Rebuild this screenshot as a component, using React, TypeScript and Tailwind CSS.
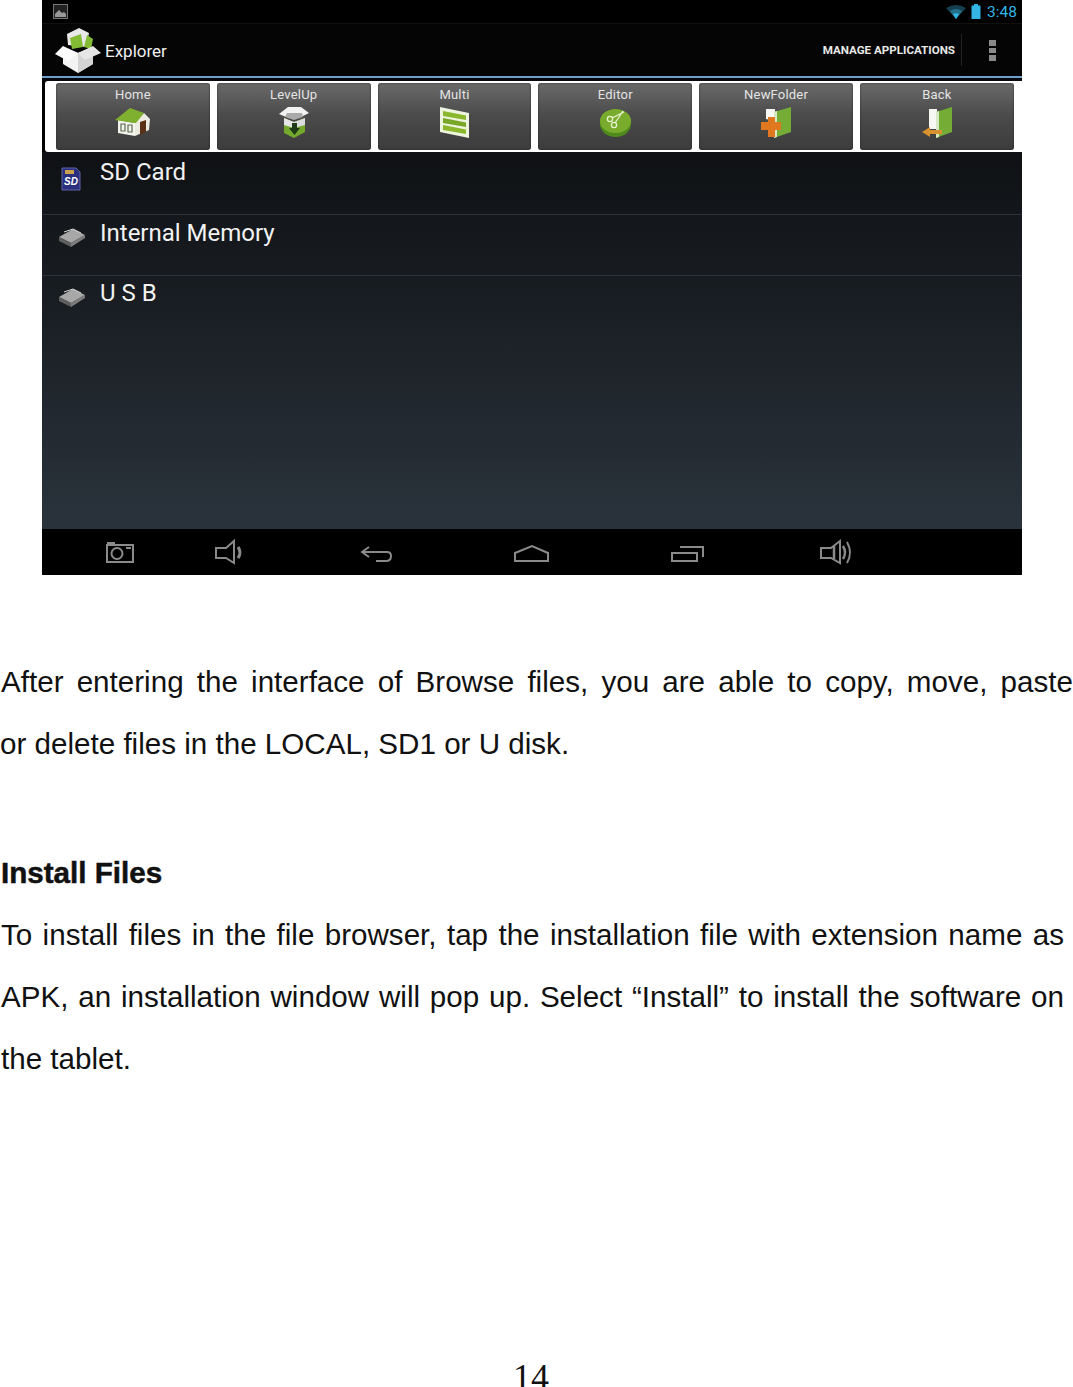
import React from "react";

const Btn = ({ label, children }: { label: string; children: React.ReactNode }) => (
  <div className="w-[153.8px] h-[67px] rounded-[3px] bg-gradient-to-b from-[#6a6a6a] via-[#4a4a4a] to-[#3c3c3c] shadow-[inset_0_0_2px_#222] flex flex-col items-center pt-[5px]">
    <span className="text-[13px] leading-[14px] text-[#e4e4e4] font-['Roboto',sans-serif] tracking-[0.2px]">{label}</span>
    <div className="mt-[3px] h-[34px] flex items-center justify-center">{children}</div>
  </div>
);

const HomeI = () => (
  <svg width="35" height="28" viewBox="0 0 35 28">
    <path d="M3 12 L20 15 L20 28 L3 25 Z" fill="#f4f4ee" />
    <path d="M20 15 L29 5 L35 11 L34 22 L20 28 Z" fill="#ecebe2" />
    <path d="M25 14 L31 12 L31 24 L25 27 Z" fill="#5a3018" />
    <path d="M0 12 L15 0 L29 5 L21 15 L19 15 Z" fill="#7fb030" />
    <path d="M6 16 H10 V23 H6 Z M13 17 H17 V24 H13 Z" fill="none" stroke="#5c6a50" strokeWidth="1.200" />
  </svg>
);
const UpI = () => (
  <svg width="30" height="32" viewBox="0 0 30 32">
    <path d="M5 12 L15 16 L26 12 L26 26 L15 32 L5 27 Z" fill="#74a92e" />
    <path d="M5 12 L15 16 L15 22 L5 19 Z" fill="#e6e6e6" />
    <path d="M15 16 L26 12 L26 19 L15 22 Z" fill="#dcdcdc" />
    <path d="M0 8 L9 1 L22 1 L30 7 L24 10 L7 11 Z" fill="#f2f2f2" />
    <path d="M8 7 H23 L24 11 L15 14 L6 11 Z" fill="#a9a9a9" />
    <path d="M13 17 H18 V22 H21 L15.500 29 L10 22 H13 Z" fill="#1f3a16" />
  </svg>
);
const MultiI = () => (
  <svg width="30" height="31" viewBox="0 0 30 31">
    <path d="M1 0 L30 6 L30 31 L1 25 Z" fill="#eef5df" />
    <path d="M4 4 L27 8.500 L27 13 L4 9 Z" fill="#8ab72c" />
    <path d="M4 11 L27 15.500 L27 20 L4 16 Z" fill="#78a626" />
    <path d="M4 18 L27 22.500 L27 27 L4 23 Z" fill="#8ab72c" />
  </svg>
);
const EditI = () => (
  <svg width="31" height="29" viewBox="0 0 31 29">
    <ellipse cx="15.500" cy="16" rx="15.500" ry="13" fill="#4f8a1c" />
    <ellipse cx="15.500" cy="13" rx="15.500" ry="12" fill="#79ac2c" />
    <circle cx="10" cy="11" r="2.600" fill="none" stroke="#e6f2d0" strokeWidth="1.300" />
    <circle cx="14" cy="17" r="2.600" fill="none" stroke="#e6f2d0" strokeWidth="1.300" />
    <path d="M12 10 L24 4 M15 15 L23 3" stroke="#e6f2d0" strokeWidth="1.300" />
  </svg>
);
const NewI = () => (
  <svg width="30" height="31" viewBox="0 0 30 31">
    <path d="M5 2 L14 2 L14 14 L5 12 Z" fill="#f7f7f3" />
    <path d="M13 5 L30 0 L30 25 L13 31 Z" fill="#74ac36" />
    <path d="M13 5 L16 4 L16 30 L13 31 Z" fill="#d8e8c4" />
    <path d="M7 10 H14 V15 H20 V23 H14 V30 H7 V23 H0 V15 H7 Z" fill="#e07820" />
  </svg>
);
const BackI = () => (
  <svg width="30" height="31" viewBox="0 0 30 31">
    <path d="M7 2 L15 2 L15 22 L7 22 Z" fill="#f7f7f3" />
    <path d="M14 5 L30 0 L30 25 L14 31 Z" fill="#74ac36" />
    <path d="M14 5 L17 4 L17 30 L14 31 Z" fill="#d8e8c4" />
    <path d="M0 25 L8 20 L8 23 L20 23 L20 27 L8 27 L8 30 Z" fill="#d9912f" />
  </svg>
);
const DriveI = () => (
  <svg width="28" height="20" viewBox="0 0 28 20">
    <path d="M1 9 L15 1 L27 7 L13 15 Z" fill="#a8a8a8" />
    <path d="M1 9 L13 15 L13 19 L1 13 Z" fill="#5f5f5f" />
    <path d="M13 15 L27 7 L27 10 L13 19 Z" fill="#7d7d7d" />
    <path d="M6 4 L15 1 L23 5" stroke="#d8d8d8" strokeWidth="1" fill="none" />
  </svg>
);
const Row = ({ icon, label, h, border, textClass }: { icon: React.ReactNode; label: string; h: string; border?: boolean; textClass?: string }) => (
  <div className={`${h} flex items-start ${border ? "border-b border-[#2c3238]" : ""}`}>
    <div className="w-[58px] pl-[2px] flex justify-center">{icon}</div>
    <span className={`text-[24px] leading-[28px] text-[#f2f2f2] font-['Roboto',sans-serif] ${textClass ?? ""}`}>{label}</span>
  </div>
);

const G = "fill-none stroke-[#8a8a8a]";

export default function App() {
  return (
    <div className="w-[1073px] h-[1387px] bg-white overflow-hidden font-['Liberation_Sans',Arial,sans-serif] text-[#111]">
      <div className="mx-[42px] w-[980px] h-[575px] bg-black flex flex-col">
        <div className="h-[24px] flex items-center justify-between pl-[11px] pr-[5px] border-b border-[#111]">
          <svg width="15" height="15" viewBox="0 0 15 15">
            <rect x="0.500" y="0.500" width="14" height="14" fill="#222" stroke="#777" />
            <path d="M2 13 L2 10 L6 6 L9 9 L11 8 L13 10 L13 13 Z" fill="#999" />
          </svg>
          <div className="flex items-center">
            <svg width="20" height="14" viewBox="0 0 20 14" className="mr-[5px]">
              <path d="M0 3 Q10 -3 20 3 L10 14 Z" fill="#16404f" />
              <path d="M4 6 Q10 2 16 6 L10 14 Z" fill="#23708c" />
              <path d="M7 9 Q10 7.500 13 9 L10 14 Z" fill="#33b5e5" />
            </svg>
            <svg width="10" height="15" viewBox="0 0 10 15" className="mr-[6px]">
              <path d="M3 0 H7 V1.500 H9.500 V15 H0.500 V1.500 H3 Z" fill="#33b5e5" />
            </svg>
            <span className="text-[15.5px] leading-[18px] text-[#33b5e5] font-['Roboto',sans-serif]">3:48</span>
          </div>
        </div>
        <div className="h-[52px] flex items-center bg-[#050505]">
          <svg width="46" height="46" viewBox="0 0 46 46" className="ml-[13px] -mt-[1px]">
            <path d="M13 18 L12 7 L24 1 L34 6 L31 20 Z" fill="#e8e8e8" />
            <path d="M15 11 L26 7 L28 20 L17 22 Z" fill="#84bb34" />
            <path d="M29 20 L32 8 L38 12 L36 22 Z" fill="#84bb34" />
            <path d="M8 20 L23 26 L38 20 L38 37 L23 46 L8 37 Z" fill="#f3f3f3" />
            <path d="M23 26 L23 46 L38 37 L38 20 Z" fill="#d4d4d4" />
            <path d="M0 27 L8 19 L23 26 L13 34 Z" fill="#fbfbfb" />
            <path d="M38 19 L23 26 L30 33 L46 26 Z" fill="#e6e6e6" />
          </svg>
          <span className="ml-[4px] mt-[3px] text-[17px] text-[#f0f0f0] font-['Roboto',sans-serif]">Explorer</span>
          <div className="ml-auto flex items-center h-full">
            <span className="mt-[2px] text-[11.6px] font-bold text-[#e8e8e8] font-['Roboto',sans-serif]">MANAGE APPLICATIONS</span>
            <div className="ml-[6px] w-px h-[32px] bg-[#222]" />
            <div className="ml-[27px] mr-[26px] flex flex-col gap-[2px]">
              <div className="w-[7px] h-[6px] bg-[#8a8a8a]" />
              <div className="w-[7px] h-[5px] bg-[#8a8a8a]" />
              <div className="w-[7px] h-[6px] bg-[#8a8a8a]" />
            </div>
          </div>
        </div>
        <div className="h-[2px] bg-[#6f9fc8]" />
        <div className="h-[3px] bg-[#05080c]" />
        <div className="h-[71px] ml-[3px] bg-white rounded-l-[3px] flex items-center pl-[11px] gap-[7px]">
          <Btn label="Home"><HomeI /></Btn>
          <Btn label="LevelUp"><UpI /></Btn>
          <Btn label="Multi"><MultiI /></Btn>
          <Btn label="Editor"><EditI /></Btn>
          <Btn label="NewFolder"><NewI /></Btn>
          <Btn label="Back"><BackI /></Btn>
        </div>
        <div className="flex-1 bg-gradient-to-b from-[#0f1114] to-[#2a333c] pt-[6px]">
          <Row h="h-[57px]" border label="SD Card" icon={
            <svg width="20" height="24" viewBox="0 0 20 24" className="mt-[9px] -ml-[2px]">
              <path d="M1 1 H15 L19 5 V23 H1 Z" fill="#2a2f7e" stroke="#5f64a8" />
              <path d="M4 3 H13 V7 H4 Z" fill="#c8a050" />
              <text x="10" y="18" textAnchor="middle" fontSize="10" fontWeight="bold" fontStyle="italic" fill="#fff" fontFamily="Liberation Sans">SD</text>
            </svg>
          } />
          <Row h="h-[61px]" border label="Internal Memory" textClass="mt-[4px]" icon={<div className="mt-[13px]"><DriveI /></div>} />
          <Row h="h-[60px]" label="U S B" textClass="mt-[3px]" icon={<div className="mt-[12px]"><DriveI /></div>} />
        </div>
        <div className="h-[46px] bg-black relative">
          <svg width="980" height="46" viewBox="0 0 980 46" className="absolute inset-0">
            <g strokeWidth="2" className={G}>
              <path d="M65 16 H91 V33 H65 Z M65 14 H73" />
              <circle cx="75" cy="24.500" r="5.500" />
              <path d="M84 19 H89" />
              <path d="M174 19 H184 L192 12 V34 L184 29 H174 Z" />
              <path d="M196 18 Q200 23.500 196 29" strokeWidth="3" />
              <path d="M327 18 L320 23 L327 28 M320 23 H345 Q349 23 349 27 Q349 32 344 32 H334" />
              <path d="M473 32 V24 L490 17 L506 24 V32 Z" />
              <path d="M630 24 H655 V32 H630 Z M638 18 H661 V28" />
              <path d="M779 19 H789 L798 12 V34 L789 29 H779 Z" />
              <path d="M792 17 V30 M801 17 Q805 23.500 801 30" strokeWidth="2.500" />
              <path d="M805 13 Q811 23.500 805 34" />
            </g>
          </svg>
        </div>
      </div>

      <div className="mt-[76px] text-[29.6px] leading-[62px]">
        <p className="pl-[1px] text-justify [text-align-last:justify]">After entering the interface of Browse files, you are able to copy, move, paste</p>
        <p>or delete files in the LOCAL, SD1 or U disk.</p>
        <p className="mt-[67px] pl-[1px] font-bold [-webkit-text-stroke:0.5px_#111]">Install Files</p>
        <p className="text-justify pl-[1px] pr-[9px]">To install files in the file browser, tap the installation file with extension name as APK, an installation window will pop up. Select “Install” to install the software on the tablet.</p>
      </div>
      <div className="mt-[277px] pr-[11px] text-center text-[36px] leading-[20px] font-['Liberation_Serif',serif]">14</div>
    </div>
  );
}
